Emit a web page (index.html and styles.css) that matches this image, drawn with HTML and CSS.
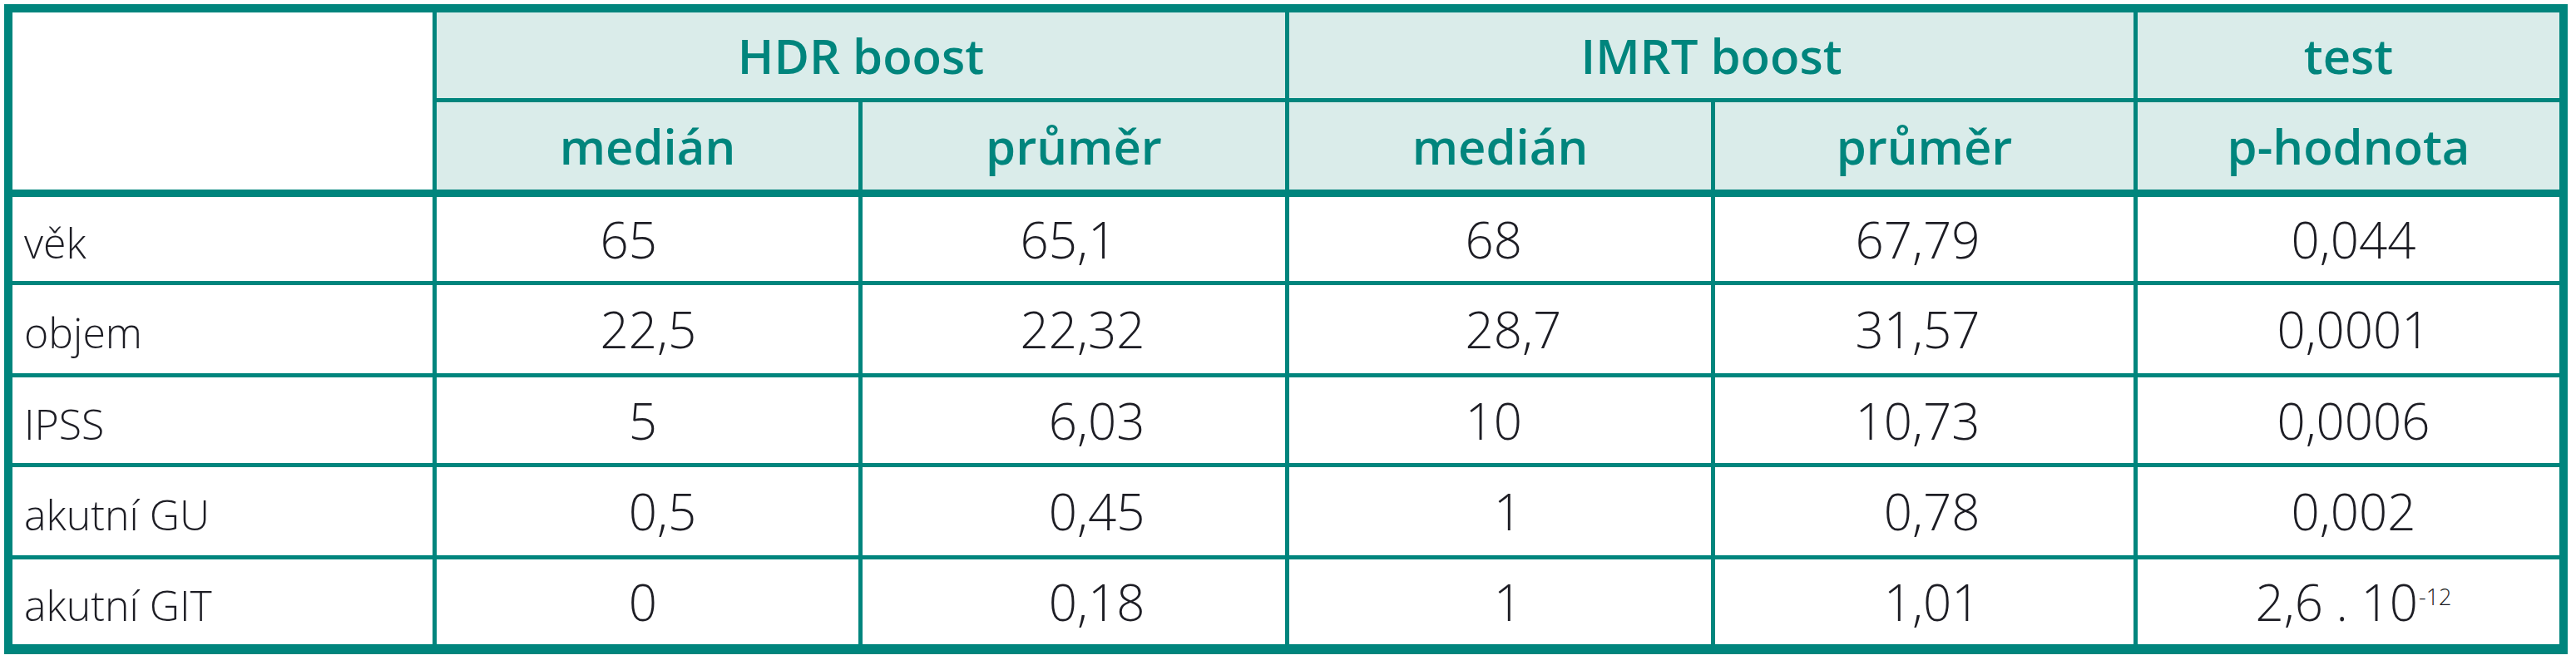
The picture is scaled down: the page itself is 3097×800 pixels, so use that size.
FILE: index.html
```html
<!DOCTYPE html>
<html lang="cs">
<head>
<meta charset="utf-8">
<title>HDR boost vs IMRT boost</title>
<link rel="stylesheet" href="styles.css">
</head>
<body>
<table class="stats">
  <colgroup>
    <col class="c0"><col class="c1"><col class="c2"><col class="c3"><col class="c4"><col class="c5">
  </colgroup>
  <thead>
    <tr class="h1">
      <th class="corner" rowspan="2"></th>
      <th colspan="2">HDR boost</th>
      <th colspan="2">IMRT boost</th>
      <th class="last">test</th>
    </tr>
    <tr class="h2">
      <th>medián</th>
      <th>průměr</th>
      <th>medián</th>
      <th>průměr</th>
      <th class="last">p-hodnota</th>
    </tr>
  </thead>
  <tbody>
    <tr class="r1">
      <td class="label">věk</td>
      <td class="num a1"><span class="int">65</span></td>
      <td class="num a2"><span class="int">65</span>,1</td>
      <td class="num a3"><span class="int">68</span></td>
      <td class="num a4"><span class="int">67</span>,79</td>
      <td class="num p last">0,044</td>
    </tr>
    <tr class="r2">
      <td class="label">objem</td>
      <td class="num a1"><span class="int">22</span>,5</td>
      <td class="num a2"><span class="int">22</span>,32</td>
      <td class="num a3"><span class="int">28</span>,7</td>
      <td class="num a4"><span class="int">31</span>,57</td>
      <td class="num p last">0,0001</td>
    </tr>
    <tr class="r3">
      <td class="label">IPSS</td>
      <td class="num a1"><span class="int">5</span></td>
      <td class="num a2"><span class="int">6</span>,03</td>
      <td class="num a3"><span class="int">10</span></td>
      <td class="num a4"><span class="int">10</span>,73</td>
      <td class="num p last">0,0006</td>
    </tr>
    <tr class="r4">
      <td class="label">akutní GU</td>
      <td class="num a1"><span class="int">0</span>,5</td>
      <td class="num a2"><span class="int">0</span>,45</td>
      <td class="num a3"><span class="int">1</span></td>
      <td class="num a4"><span class="int">0</span>,78</td>
      <td class="num p last">0,002</td>
    </tr>
    <tr class="r5">
      <td class="label">akutní GIT</td>
      <td class="num a1"><span class="int">0</span></td>
      <td class="num a2"><span class="int">0</span>,18</td>
      <td class="num a3"><span class="int">1</span></td>
      <td class="num a4"><span class="int">1</span>,01</td>
      <td class="num p last">2,6 . 10<sup class="exp">-12</sup></td>
    </tr>
  </tbody>
</table>
</body>
</html>
```
FILE: styles.css
```css
html, body {
  margin: 0;
  padding: 0;
  background: #ffffff;
}

.stats {
  margin: 5px;
  width: 3082px;
  table-layout: fixed;
  border-collapse: separate;
  border-spacing: 0;
  border: 10px solid #00857d;
  border-bottom-width: 12px;
}

.c0 { width: 510px; }
.c1 { width: 512px; }
.c2 { width: 513px; }
.c3 { width: 512px; }
.c4 { width: 508px; }
.c5 { width: 507px; }

.stats th,
.stats td {
  padding: 0;
  border-right: 5px solid #00857d;
  border-bottom: 5px solid #00857d;
  vertical-align: middle;
  white-space: nowrap;
}

.stats .last {
  border-right: 0;
}

.stats tbody tr:last-child td {
  border-bottom: 0;
}

.stats thead th {
  background: #daecea;
  color: #00857d;
  font-family: "Open Sans", "DejaVu Sans", sans-serif;
  font-weight: 600;
  font-size: 58px;
  text-align: center;
}

.stats .h2 th,
.stats .corner {
  border-bottom-width: 9px;
}

.stats thead th.corner {
  background: #ffffff;
}

.h1 { height: 108px; }
.h2 { height: 114px; }
.r1 { height: 106px; }
.r2 { height: 111px; }
.r3 { height: 108px; }
.r4 { height: 111px; }
.r5 { height: 102px; }

.label {
  font-family: "Open Sans", "DejaVu Sans", sans-serif;
  font-weight: 300;
  font-size: 50px;
  color: #1d1d24;
  padding: 8px 0 0 14px !important;
}

.num {
  font-family: "Open Sans", "DejaVu Sans", sans-serif;
  font-weight: 300;
  font-size: 60px;
  font-stretch: 88%;
  color: #1d1d24;
}

.int {
  display: inline-block;
  text-align: right;
}

.a1 .int { width: 265px; }
.a2 .int { width: 258px; }
.a3 .int { width: 280px; }
.a4 .int { width: 237px; }

.p {
  text-align: center;
  padding-left: 12px !important;
}

.exp {
  font-size: 27px;
  vertical-align: 19px;
  line-height: 0;
  margin-left: 1px;
}
```
